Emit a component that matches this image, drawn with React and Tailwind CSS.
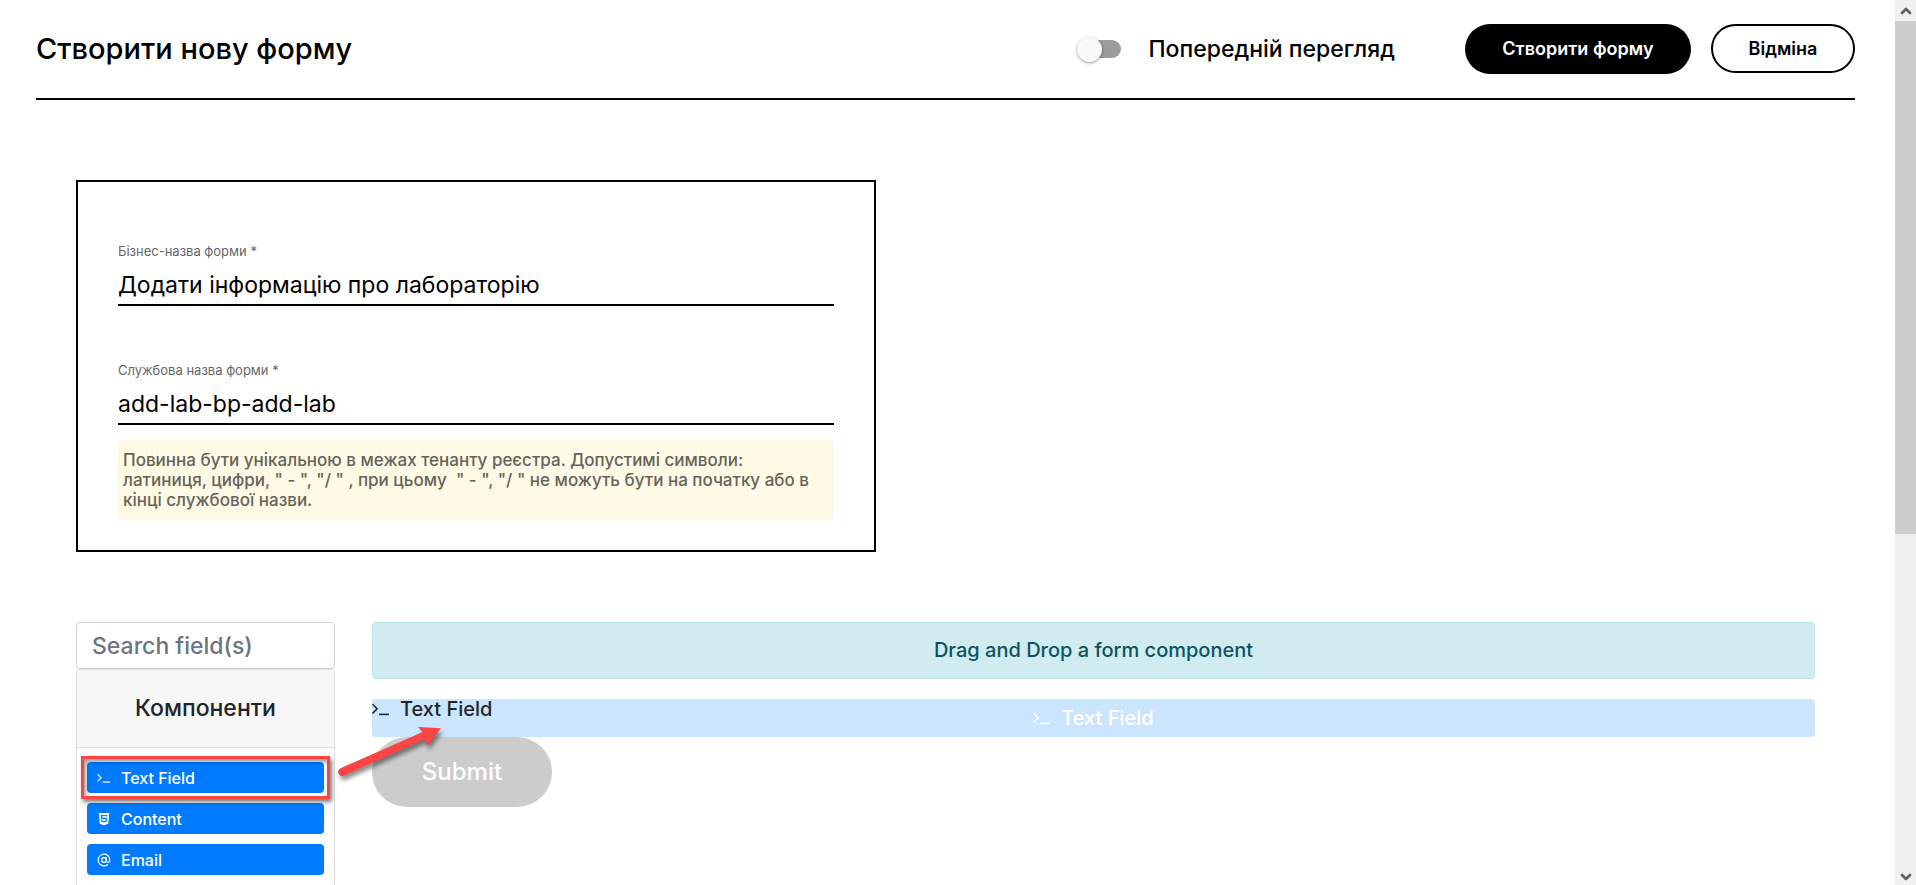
import { AtSign, ChevronDown, ChevronUp } from "lucide-react";
import { FaHtml5 } from "react-icons/fa";

function TerminalIcon({ className }) {
  return (
    <svg viewBox="0 0 18 16" fill="none" stroke="currentColor" strokeWidth="1.6" className={className} aria-hidden="true">
      <path d="M0.5 3.2 5.1 7.8 0.5 12.4" />
      <path d="M7 13.4h10" />
    </svg>
  );
}

function FormField({ id, label, value }) {
  return (
    <div className="flex flex-col gap-2">
      <label htmlFor={id} className="text-[13px] leading-4 text-[#666666]">
        {label}
      </label>
      <input
        id={id}
        type="text"
        defaultValue={value}
        className="h-[39px] w-full border-b-2 border-black bg-transparent pb-0.5 text-[23px] text-black outline-none"
      />
    </div>
  );
}

function ComponentButton({ icon, children }) {
  return (
    <button
      type="button"
      className="flex h-[31px] w-full items-center gap-2.5 rounded bg-[#007bff] px-2.5 text-base font-medium text-white"
    >
      {icon}
      {children}
    </button>
  );
}

function DragArrow() {
  return (
    <svg
      viewBox="0 0 120 70"
      className="pointer-events-none absolute -top-[42px] left-[243px] z-10 h-[70px] w-[120px] max-w-none"
      style={{ filter: "drop-shadow(2px 4px 2px rgba(0,0,0,0.45))" }}
      aria-hidden="true"
    >
      <path d="M10.5 48.3 92.5 12 88 7 111 8.2 97 26 95 19 13.5 55.7A4 4 0 0 1 10.5 48.3Z" fill="#fb4444" />
    </svg>
  );
}

function Header() {
  return (
    <header className="flex items-center justify-between border-b-2 border-black py-6">
      <h1 className="text-[29px] leading-[50px] font-medium">Створити нову форму</h1>
      <div className="flex items-center">
        <label className="flex items-center gap-[27px] text-[23px] font-medium">
          <input type="checkbox" role="switch" className="peer sr-only" />
          <span className="flex h-[18px] w-[44px] items-center rounded-full bg-[#9b9b9b]">
            <span className="size-[25px] rounded-full bg-[#fafafa] shadow-[0_1px_3px_rgba(0,0,0,0.4)]" />
          </span>
          Попередній перегляд
        </label>
        <div className="ml-[70px] flex items-start gap-5">
          <button type="button" className="h-[50px] w-[226px] rounded-full bg-black text-lg font-semibold text-white">
            Створити форму
          </button>
          <button type="button" className="h-[49px] w-36 rounded-full border-2 border-black text-lg font-semibold">
            Відміна
          </button>
        </div>
      </div>
    </header>
  );
}

function FormDetails() {
  return (
    <section className="mt-20 w-full max-w-[800px] border-2 border-black px-10 pt-[61px] pb-[30px]">
      <div className="flex flex-col gap-14">
        <FormField id="business-name" label="Бізнес-назва форми *" value="Додати інформацію про лабораторію" />
        <FormField id="service-name" label="Службова назва форми *" value="add-lab-bp-add-lab" />
      </div>
      <p className="mt-[15px] bg-[#fffae6] px-[5px] py-2.5 text-[17px] leading-5 font-medium text-[#666359]">
        Повинна бути унікальною в межах тенанту реєстра. Допустимі символи:
        <br />
        латиниця, цифри, " - ", "/ " , при цьому&nbsp; " - ", "/ " не можуть бути на початку або в кінці службової назви.
      </p>
    </section>
  );
}

function Palette() {
  return (
    <aside className="flex w-[259px] shrink-0 flex-col">
      <input
        type="search"
        aria-label="Search field(s)"
        placeholder="Search field(s)"
        className="h-[47px] w-full shrink-0 rounded border border-[#ced4da] px-[15px] text-[23px] font-medium outline-none placeholder:text-[#6c757d]"
      />
      <div className="flex flex-1 flex-col rounded-t border border-b-0 border-[#dfdfdf]">
        <h2 className="rounded-t border-b border-[#dfdfdf] bg-[#f7f7f7] text-center text-[23px] leading-[77px] font-medium text-[#212529]">
          Компоненти
        </h2>
        <div className="flex flex-col gap-2.5 px-2.5 pt-3.5">
          <div className="relative">
            <ComponentButton icon={<TerminalIcon className="h-3 w-3.5" />}>Text Field</ComponentButton>
            <span className="pointer-events-none absolute -inset-[6px] border-3 border-[#fb4444] shadow-[2px_3px_4px_rgba(0,0,0,0.5),inset_2px_3px_4px_rgba(0,0,0,0.4)]" />
            <DragArrow />
          </div>
          <ComponentButton icon={<FaHtml5 className="size-3.5" />}>Content</ComponentButton>
          <ComponentButton icon={<AtSign className="size-3.5" />}>Email</ComponentButton>
        </div>
      </div>
    </aside>
  );
}

function Canvas() {
  return (
    <section className="min-w-0 flex-1">
      <div className="rounded border border-[#bee5eb] bg-[#d1ecf1] text-center text-xl leading-[55px] font-medium text-[#0c5460]">
        Drag and Drop a form component
      </div>
      <div className="relative mt-5 flex h-[38px] items-center justify-center gap-2.5 rounded bg-[#cce5ff] text-xl font-medium text-white">
        <TerminalIcon className="h-4 w-[18px]" />
        Text Field
        <span className="absolute top-0 left-0 flex items-center gap-2.5 leading-5 text-[#212529]">
          <TerminalIcon className="h-4 w-[18px]" />
          Text Field
        </span>
      </div>
      <button type="button" disabled className="h-[70px] w-[180px] rounded-full bg-[#cccccc] text-2xl font-medium text-white">
        Submit
      </button>
    </section>
  );
}

function ScrollTrack() {
  return (
    <div className="flex w-[21px] shrink-0 flex-col bg-[#f0f0f0] text-[#606060]" aria-hidden="true">
      <div className="flex h-[21px] items-center justify-center">
        <ChevronUp className="size-4" strokeWidth={4} />
      </div>
      <div className="h-[58%] bg-[#cdcdcd]" />
      <div className="mt-auto flex justify-center">
        <ChevronDown className="size-4" strokeWidth={4} />
      </div>
    </div>
  );
}

export default function App() {
  return (
    <div className="flex h-screen overflow-hidden bg-white font-['Inter','Liberation_Sans',sans-serif] text-black">
      <main className="flex min-w-0 flex-1 flex-col pr-10 pl-9">
        <Header />
        <div className="flex flex-1 flex-col px-10">
          <FormDetails />
          <div className="mt-[70px] flex flex-1 gap-[37px]">
            <Palette />
            <Canvas />
          </div>
        </div>
      </main>
      <ScrollTrack />
    </div>
  );
}
